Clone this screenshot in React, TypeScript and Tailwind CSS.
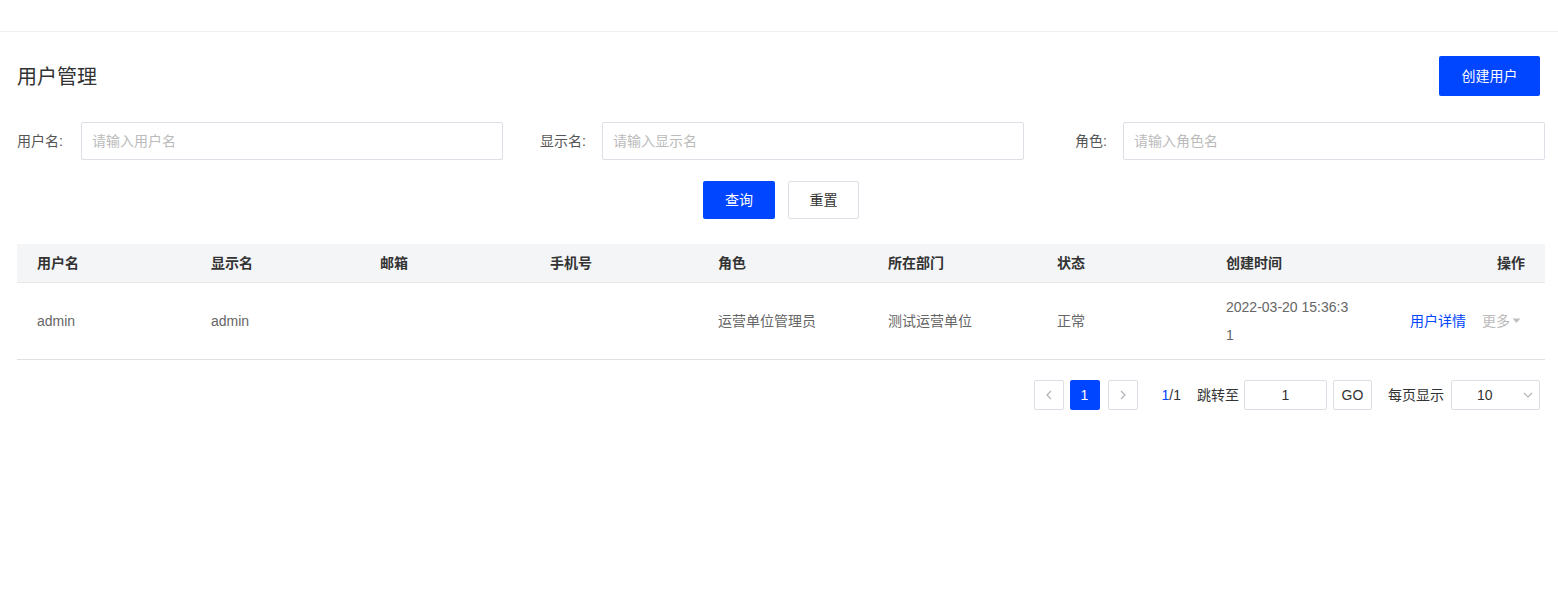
import React from "react";

const font = { fontFamily: '"Liberation Sans", "Noto Sans CJK SC", sans-serif' };

const columns = ["用户名", "显示名", "邮箱", "手机号", "角色", "所在部门", "状态", "创建时间"];

// column widths read off the screenshot, last column takes the rest
const gridCols = "grid-cols-[174px_169px_170px_168px_170px_169px_169px_165px_1fr]";

const SearchField = ({ label, placeholder }: { label: string; placeholder: string }) => (
  <div className="flex items-center">
    <label className="w-[64px] shrink-0 pr-[16px] text-right text-[14px] text-[#555]">{label}</label>
    <input
      placeholder={placeholder}
      className="h-[38px] flex-1 min-w-0 rounded-[2px] border border-[#dcdfe6] px-[10px] text-[14px] text-[#333] outline-none placeholder:text-[#bbb]"
    />
  </div>
);

const Chevron = ({ dir }: { dir: "left" | "right" | "down" }) => {
  const d = dir === "left" ? "M8 3 L4 7 L8 11" : dir === "right" ? "M4 3 L8 7 L4 11" : "M3 5 L7 9 L11 5";
  return (
    <svg width="12" height="14" viewBox="0 0 12 14" fill="none" stroke="#b0b3b8" strokeWidth="1.2">
      <path d={d} />
    </svg>
  );
};

export default function App() {
  return (
    <div className="min-h-screen bg-white" style={font}>
      <div className="h-[32px] border-b border-[#f0f0f0]" />

      <div className="pl-[17px] pr-[13px]">
        <div className="mt-[24px] flex h-[40px] items-center justify-between">
          <h1 className="pt-[2px] text-[20px] text-[#333]">用户管理</h1>
          <button className="mr-[5px] h-[40px] w-[101px] rounded-[2px] bg-[#0045ff] text-[14px] text-white">
            创建用户
          </button>
        </div>

        <div className="mt-[26px] grid grid-cols-3 gap-x-[35px]">
          <div className="flex items-center">
            <label className="w-[64px] shrink-0 text-[14px] text-[#555]">用户名:</label>
            <input
              placeholder="请输入用户名"
              className="h-[38px] flex-1 min-w-0 rounded-[2px] border border-[#dcdfe6] px-[10px] text-[14px] text-[#333] outline-none placeholder:text-[#bbb]"
            />
          </div>
          <SearchField label="显示名:" placeholder="请输入显示名" />
          <SearchField label="角色:" placeholder="请输入角色名" />
        </div>

        <div className="mt-[21px] flex justify-center gap-[13px]">
          <button className="h-[38px] w-[72px] rounded-[2px] bg-[#0045ff] text-[14px] text-white">查询</button>
          <button className="h-[38px] w-[71px] rounded-[2px] border border-[#dcdfe6] bg-white text-[14px] text-[#333]">
            重置
          </button>
        </div>

        <div className="mt-[25px]">
          <div className={`grid h-[39px] ${gridCols} items-center border-b border-[#e8e8e8] bg-[#f3f5f7] text-[14px] font-bold text-[#333]`}>
            {columns.map((c) => (
              <div key={c} className="px-[20px]">
                {c}
              </div>
            ))}
            <div className="px-[20px] text-right">操作</div>
          </div>
          <div className={`grid ${gridCols} items-center border-b border-[#e0e0e0] py-[10px] text-[14px] leading-[28px] text-[#666]`}>
            <div className="px-[20px]">admin</div>
            <div className="px-[20px]">admin</div>
            <div className="px-[20px]" />
            <div className="px-[20px]" />
            <div className="px-[20px]">运营单位管理员</div>
            <div className="px-[20px]">测试运营单位</div>
            <div className="px-[20px]">正常</div>
            <div className="px-[20px] break-all">2022-03-20 15:36:31</div>
            <div className="flex items-center justify-end gap-[16px] pl-[10px] pr-[24px]">
              <span className="text-[#0045ff]">用户详情</span>
              <span className="flex items-center text-[#bbb]">
                更多
                <svg width="9" height="6" viewBox="0 0 9 6" className="ml-[2px]">
                  <path d="M0.5 0.5 L8.5 0.5 L4.5 5 Z" fill="#c0c0c0" />
                </svg>
              </span>
            </div>
          </div>
        </div>

        <div className="mt-[20px] flex items-center justify-end pr-[5px] text-[14px] text-[#333]">
          <button className="flex h-[30px] w-[30px] items-center justify-center rounded-[2px] border border-[#dcdfe6]">
            <Chevron dir="left" />
          </button>
          <button className="ml-[6px] h-[30px] w-[30px] rounded-[2px] bg-[#0045ff] text-white">1</button>
          <button className="ml-[8px] flex h-[30px] w-[30px] items-center justify-center rounded-[2px] border border-[#dcdfe6]">
            <Chevron dir="right" />
          </button>
          <span className="ml-[24px]">
            <span className="text-[#0045ff]">1</span>/1
          </span>
          <span className="ml-[16px]">跳转至</span>
          <input
            defaultValue="1"
            className="ml-[5px] h-[30px] w-[83px] rounded-[2px] border border-[#dcdfe6] text-center text-[14px] outline-none"
          />
          <button className="ml-[6px] h-[30px] w-[39px] rounded-[2px] border border-[#dcdfe6] text-[14px]">GO</button>
          <span className="ml-[16px]">每页显示</span>
          <div className="ml-[7px] flex h-[30px] w-[89px] items-center justify-between rounded-[2px] border border-[#dcdfe6] pl-[25px] pr-[6px]">
            <span>10</span>
            <Chevron dir="down" />
          </div>
        </div>
      </div>
    </div>
  );
}
